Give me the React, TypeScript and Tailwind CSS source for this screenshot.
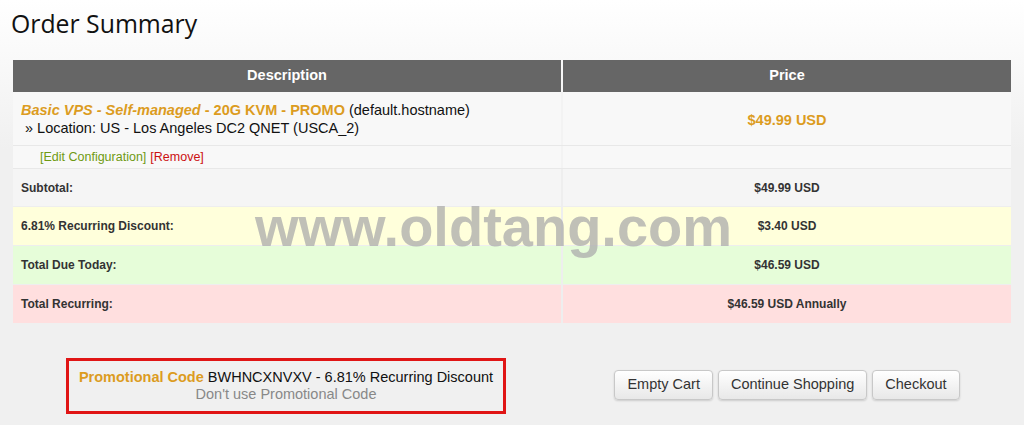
const arial = "font-['Liberation_Sans',Arial,sans-serif]";

function SummaryRow({
  label,
  value,
  bg,
  h = "h-[38px]",
}: {
  label: string;
  value: string;
  bg: string;
  h?: string;
}) {
  return (
    <div className="grid grid-cols-[548px_448px] gap-[2px]">
      <div className={`${bg} ${h} flex items-center pl-2 text-[12px] font-bold text-[#333]`}>
        {label}
      </div>
      <div className={`${bg} ${h} flex items-center justify-center text-[12px] font-bold text-[#333]`}>
        {value}
      </div>
    </div>
  );
}

export default function App() {
  return (
    <div
      className={`relative h-[425px] w-[1024px] overflow-hidden bg-[linear-gradient(#ffffff,#f0f0f0_150px)] ${arial}`}
    >
      <h1 className="pl-[11px] pt-[5px] font-['Open_Sans',sans-serif] text-[24.8px] font-normal leading-[36px] text-[#111]">
        Order Summary
      </h1>

      <div className="ml-[13px] mt-[19px] w-[998px]">
        {/* header */}
        <div className="grid grid-cols-[548px_448px] gap-[2px]">
          <div className="flex h-[32px] items-center justify-center bg-[#666] text-[14.5px] font-bold text-white">
            Description
          </div>
          <div className="flex h-[32px] items-center justify-center bg-[#666] text-[14.5px] font-bold text-white">
            Price
          </div>
        </div>

        {/* product */}
        <div className="grid grid-cols-[548px_448px] gap-[2px] bg-[#f3f3f3]">
          <div className="flex h-[53px] flex-col justify-center bg-[#f8f8f8] pl-[8px] pt-[1px] text-[14.5px] leading-[18px] text-[#111]">
            <div>
              <span className="font-bold text-[#dc9c1f]">
                <em>Basic VPS - Self-managed</em> - 20G KVM - PROMO
              </span>{" "}
              (default.hostname)
            </div>
            <div className="pl-[4px]">» Location: US - Los Angeles DC2 QNET (USCA_2)</div>
          </div>
          <div className="flex h-[53px] items-center justify-center bg-[#f8f8f8] pt-[4px] text-[14.5px] font-bold text-[#dc9c1f]">
            $49.99 USD
          </div>
        </div>

        {/* edit row */}
        <div className="grid grid-cols-[548px_448px] gap-[2px] border-t border-[#e8e8e8] bg-[#f3f3f3]">
          <div className="flex h-[22px] items-center bg-[#f8f8f8] pl-[27px] text-[12.5px]">
            <span className="text-[#6f9a12]">[Edit Configuration]</span>
            <span className="ml-[4px] text-[#cc1111]">[Remove]</span>
          </div>
          <div className="h-[22px] bg-[#f8f8f8]" />
        </div>

        <div className="flex flex-col gap-px border-t border-[#e8e8e8] bg-[#eeeeee]">
          <SummaryRow label="Subtotal:" value="$49.99 USD" bg="bg-[#f5f5f5]" h="h-[37px]" />
          <SummaryRow label="6.81% Recurring Discount:" value="$3.40 USD" bg="bg-[#ffffdb]" />
          <SummaryRow label="Total Due Today:" value="$46.59 USD" bg="bg-[#e6fdd9]" />
          <SummaryRow label="Total Recurring:" value="$46.59 USD Annually" bg="bg-[#ffdfdf]" />
        </div>

        {/* footer */}
        <div className="mt-[35px] grid grid-cols-[548px_448px] gap-[2px]">
          <div className="flex justify-center pr-[2px]">
            <div className="flex h-[56px] w-[440px] flex-col items-center justify-center border-[3px] border-[#e01515] text-[14.5px] leading-[17px]">
              <div className="text-[#111]">
                <span className="font-bold text-[#dc9c1f]">Promotional Code</span> BWHNCXNVXV - 6.81%
                Recurring Discount
              </div>
              <div className="text-[#888]">Don't use Promotional Code</div>
            </div>
          </div>
          <div className="flex items-start justify-center gap-[5px] pt-[12px]">
            {["Empty Cart", "Continue Shopping", "Checkout"].map((b) => (
              <button
                key={b}
                type="button"
                className="h-[30px] rounded-[4px] border border-[#c8c8c8] bg-[linear-gradient(#ffffff,#e8e8e8)] px-[12px] text-[14.5px] text-[#333] shadow-[0_1px_2px_rgba(0,0,0,0.15)]"
              >
                {b}
              </button>
            ))}
          </div>
        </div>
      </div>

      {/* watermark */}
      <div className="pointer-events-none absolute left-[255px] top-[199px] text-[56px] font-bold leading-none text-[#ababab]/75">
        www.oldtang.com
      </div>
    </div>
  );
}
